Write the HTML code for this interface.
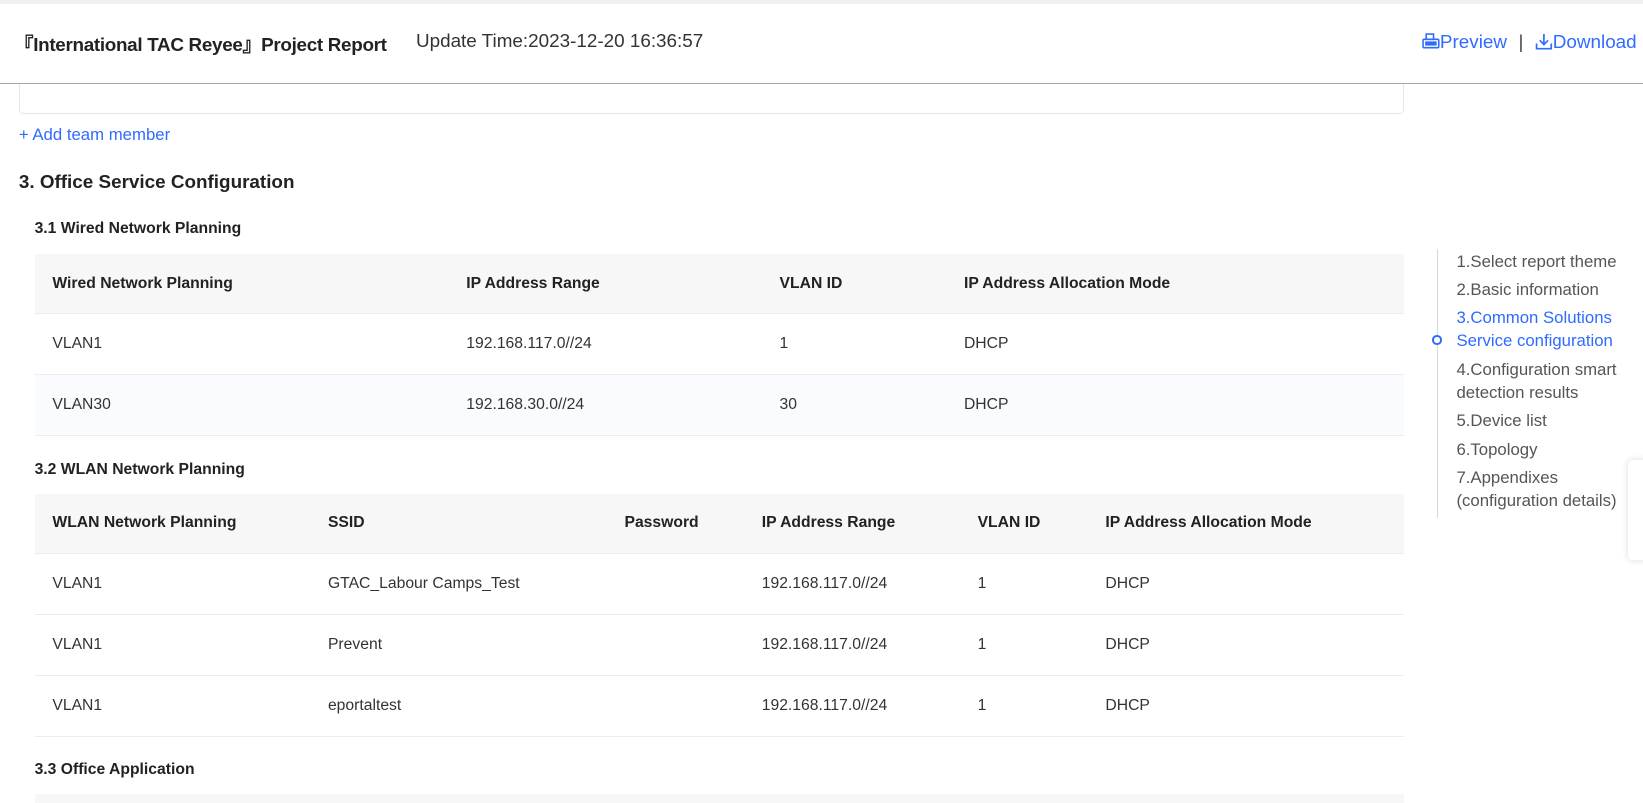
<!DOCTYPE html>
<html><head><meta charset="utf-8"><style>
*{box-sizing:border-box;margin:0;padding:0}
body{width:1643px;height:803px;overflow:hidden;background:#fff;font-family:"Liberation Sans",sans-serif;color:#333}
.w{position:relative;width:1568px;height:766px;zoom:1.0478;overflow:hidden}
.top{position:absolute;left:0;top:0;width:1568px;height:4px;background:#eef0f4}
.hdr{position:absolute;left:0;top:4px;width:1568px;height:76px;border-bottom:1px solid #a8a8a8;background:#fff}
.t1{position:absolute;left:14px;top:25px;font-size:18px;font-weight:bold;color:#222;letter-spacing:-0.3px}
.t2{position:absolute;left:397px;top:25px;font-size:18px;color:#333}
.links{position:absolute;right:6px;top:26px;font-size:18px;color:#2f6bff;white-space:nowrap}
.card{position:absolute;left:18px;top:70px;width:1322px;height:39px;border:1px solid #e6e6e6;border-top:none;border-radius:0 0 4px 4px}
.add{position:absolute;left:18px;top:119px;font-size:16px;color:#2f6bff}
h2{position:absolute;left:18px;top:163px;font-size:18px;font-weight:bold;color:#222}
h3{position:absolute;left:33px;font-size:15px;font-weight:bold;color:#222}
.tb{position:absolute;left:33px;width:1307px}
.row{position:relative;height:58px;border-bottom:1px solid #ececec;font-size:15px}
.row span{position:absolute;top:20px}
.hd{background:#f7f7f7;font-weight:bold;color:#222}
.alt{background:#fafbfe}
.nav{position:absolute;left:1371px;top:238px;width:1px;height:256px;background:#d6d6d6}
.nv{position:absolute;left:1390px;font-size:16px;color:#555;line-height:22px}
.dot{position:absolute;left:1367px;top:320px;width:9px;height:9px;border:2px solid #2f6bff;border-radius:50%;background:#fff}
.float{position:absolute;left:1554px;top:439px;width:30px;height:95px;background:#fff;box-shadow:0 0 6px rgba(0,0,0,.15);border-radius:4px}
</style></head><body><div class="w">
<div class="top"></div>
<div class="card"></div>
<div class="hdr">
<div class="t1">『International TAC Reyee』Project Report</div>
<div class="t2">Update Time:2023-12-20 16:36:57</div>
<div class="links">
<svg width="17" height="17" viewBox="0 0 17 17" style="vertical-align:-2px"><rect x="4" y="1" width="7" height="5" fill="none" stroke="#2f6bff" stroke-width="1.5"/><rect x="1" y="6" width="15" height="8" rx="1" fill="none" stroke="#2f6bff" stroke-width="1.5"/><rect x="3" y="8" width="11" height="4" fill="#2f6bff"/></svg>Preview <span style="color:#444;margin:0 6px">|</span> <svg width="17" height="17" viewBox="0 0 17 17" style="vertical-align:-2px"><path d="M8.5 1v10M4.5 7l4 4 4-4M1.5 10v5h14v-5" fill="none" stroke="#2f6bff" stroke-width="1.6"/></svg>Download</div>
</div>
<div class="add">+ Add team member</div>
<h2>3. Office Service Configuration</h2>
<h3 style="top:210px">3.1 Wired Network Planning</h3>
<div class="tb" style="top:242px">
<div class="row hd"><span style="left:17px">Wired Network Planning</span><span style="left:412px">IP Address Range</span><span style="left:711px">VLAN ID</span><span style="left:887px">IP Address Allocation Mode</span></div>
<div class="row"><span style="left:17px">VLAN1</span><span style="left:412px">192.168.117.0//24</span><span style="left:711px">1</span><span style="left:887px">DHCP</span></div>
<div class="row alt"><span style="left:17px">VLAN30</span><span style="left:412px">192.168.30.0//24</span><span style="left:711px">30</span><span style="left:887px">DHCP</span></div>
</div>
<h3 style="top:440px">3.2 WLAN Network Planning</h3>
<div class="tb" style="top:471px">
<div class="row hd"><span style="left:17px">WLAN Network Planning</span><span style="left:280px">SSID</span><span style="left:563px">Password</span><span style="left:694px">IP Address Range</span><span style="left:900px">VLAN ID</span><span style="left:1022px">IP Address Allocation Mode</span></div>
<div class="row"><span style="left:17px">VLAN1</span><span style="left:280px">GTAC_Labour Camps_Test</span><span style="left:694px">192.168.117.0//24</span><span style="left:900px">1</span><span style="left:1022px">DHCP</span></div>
<div class="row"><span style="left:17px">VLAN1</span><span style="left:280px">Prevent</span><span style="left:694px">192.168.117.0//24</span><span style="left:900px">1</span><span style="left:1022px">DHCP</span></div>
<div class="row"><span style="left:17px">VLAN1</span><span style="left:280px">eportaltest</span><span style="left:694px">192.168.117.0//24</span><span style="left:900px">1</span><span style="left:1022px">DHCP</span></div>
</div>
<h3 style="top:726px">3.3 Office Application</h3>
<div style="position:absolute;left:33px;top:758px;width:1307px;height:8px;background:#f7f7f7"></div>
<div class="nav"></div><div class="dot"></div>
<div class="nv" style="top:239px">1.Select report theme</div>
<div class="nv" style="top:265px">2.Basic information</div>
<div class="nv" style="top:292px;color:#2f6bff">3.Common Solutions<br>Service configuration</div>
<div class="nv" style="top:342px">4.Configuration smart<br>detection results</div>
<div class="nv" style="top:390px">5.Device list</div>
<div class="nv" style="top:418px">6.Topology</div>
<div class="nv" style="top:445px">7.Appendixes<br>(configuration details)</div>
<div class="float"></div>
</div></body></html>
